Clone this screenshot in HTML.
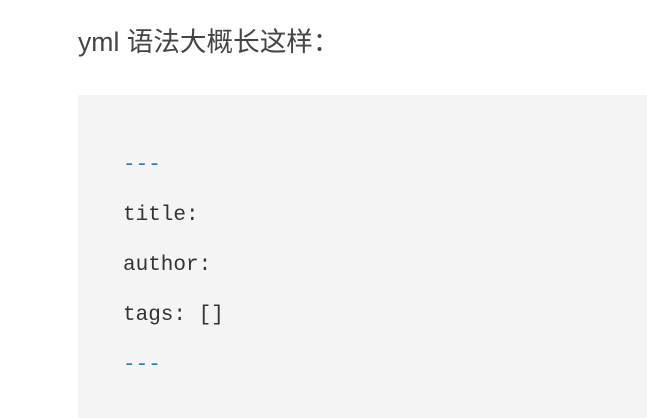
<!DOCTYPE html>
<html><head><meta charset="utf-8"><style>
html,body{margin:0;padding:0;background:#fff;width:647px;height:418px;overflow:hidden}
h{position:absolute;left:78px;top:20px;font:26.6px "Liberation Sans","Noto Sans CJK SC",sans-serif;color:#444;white-space:nowrap}
.code{position:absolute;left:78px;top:95px;width:569px;height:323px;background:#f4f4f4}
.l{position:absolute;left:45px;font:21px "Liberation Mono","DejaVu Sans Mono",monospace;color:#333;white-space:pre;line-height:24px}
.b{color:#2a7ba8}
</style></head><body>
<h>yml 语法大概长这样：</h>
<div class="code">
<div class="l b" style="top:59px">---</div>
<div class="l" style="top:109px">title:</div>
<div class="l" style="top:159px">author:</div>
<div class="l" style="top:209px">tags: []</div>
<div class="l b" style="top:259px">---</div>
</div>
</body></html>
